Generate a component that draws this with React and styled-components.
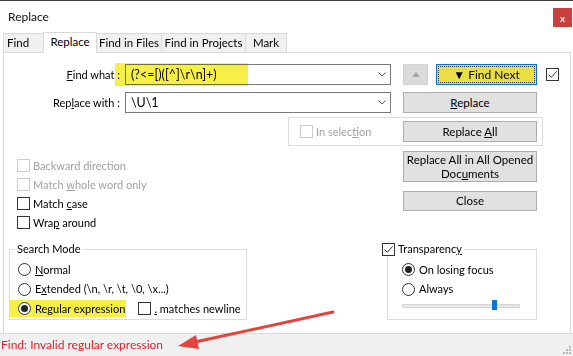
import React from "react";
import styled, { createGlobalStyle } from "styled-components";

const GlobalStyle = createGlobalStyle`
  html, body { margin: 0; padding: 0; background: #fff; }
  body {
    font-family: Lato, "Liberation Sans", sans-serif;
    font-size: 11px;
    line-height: 14px;
    color: #000;
  }
`;

const tabs = [
  { label: "Find", w: 41, left: true },
  { label: "Replace", w: 54, active: true },
  { label: "Find in Files", w: 66 },
  { label: "Find in Projects", w: 85 },
  { label: "Mark", w: 42 },
];

function CheckBox({ checked, disabled, children }) {
  return (
    <CheckLabel $disabled={disabled}>
      <Box $disabled={disabled}>
        {checked && (
          <svg width="11" height="11" viewBox="0 0 11 11">
            <path d="M1.5 5.5 L4.3 8.3 L9.6 2.4" fill="none" stroke="#333" strokeWidth="1" />
          </svg>
        )}
      </Box>
      {children && <span>{children}</span>}
    </CheckLabel>
  );
}

function Radio({ checked, children }) {
  return (
    <CheckLabel>
      <Circle>{checked && <Dot />}</Circle>
      <span>{children}</span>
    </CheckLabel>
  );
}

function Chevron() {
  return (
    <svg width="8" height="5" viewBox="0 0 8 5">
      <path d="M0.5 0.5 L4 4 L7.5 0.5" fill="none" stroke="#555" strokeWidth="1" />
    </svg>
  );
}

function Combo({ value }) {
  return (
    <ComboBox>
      <span>{value}</span>
      <ChevronSlot>
        <Chevron />
      </ChevronSlot>
    </ComboBox>
  );
}

function Btn({ h, children }) {
  return (
    <Button $h={h}>
      <span>{children}</span>
    </Button>
  );
}

function Slider({ value }) {
  return (
    <SliderRow>
      <Track>
        <Thumb style={{ left: `${value}%` }} />
      </Track>
    </SliderRow>
  );
}

export default function App() {
  return (
    <>
      <GlobalStyle />
      <Window>
        <TitleBar>
          <Title>Replace</Title>
          <CloseBox>x</CloseBox>
        </TitleBar>
        <TabStrip>
          {tabs.map((t) => (
            <Tab key={t.label} $w={t.w} $active={t.active} $left={t.left}>
              {t.label}
            </Tab>
          ))}
        </TabStrip>
        <Panel>
          <FieldRow $top={11}>
            <Label>
              <U>F</U>ind what :
            </Label>
            <Combo value="(?<=[)([^]\r\n]+)" />
            <UpButton>
              <svg width="8" height="5" viewBox="0 0 8 5">
                <path d="M0 5 L4 0 L8 5 Z" fill="#a5a5a5" />
              </svg>
            </UpButton>
            <FindNext>
              <FocusRing>▼ Find Next</FocusRing>
            </FindNext>
            <CheckSlot>
              <CheckBox checked />
            </CheckSlot>
            <Highlight $left={111} $width={133} />
          </FieldRow>
          <FieldRow $top={7}>
            <Label>
              Rep<U>l</U>ace with :
            </Label>
            <Combo value="\U\1" />
            <ActionSlot>
              <Btn>
                <U>R</U>eplace
              </Btn>
            </ActionSlot>
          </FieldRow>
          <SelectionRow>
            <SelectionBox>
              <SelectionCheck>
                <CheckBox disabled>
                  In selec<U>t</U>ion
                </CheckBox>
              </SelectionCheck>
              <Btn>
                Replace <U>A</U>ll
              </Btn>
            </SelectionBox>
          </SelectionRow>
          <Lower>
            <LeftCol>
              <Option>
                <CheckBox disabled>Backward direction</CheckBox>
              </Option>
              <Option>
                <CheckBox disabled>
                  Match <U>w</U>hole word only
                </CheckBox>
              </Option>
              <Option>
                <CheckBox>
                  Match <U>c</U>ase
                </CheckBox>
              </Option>
              <Option>
                <CheckBox>
                  Wra<U>p</U> around
                </CheckBox>
              </Option>
              <SearchGroup>
                <Legend $offset={5}>Search Mode</Legend>
                <GroupBody $pad={8}>
                  <GroupRow $h={19}>
                    <Radio>
                      <U>N</U>ormal
                    </Radio>
                  </GroupRow>
                  <GroupRow $h={20}>
                    <Radio>
                      E<U>x</U>tended (\n, \r, \t, \0, \x...)
                    </Radio>
                  </GroupRow>
                  <GroupRow $h={19}>
                    <Marked>
                      <Radio checked>
                        Re<U>g</U>ular expression
                      </Radio>
                    </Marked>
                    <CheckBox>
                      <U>.</U> matches newline
                    </CheckBox>
                  </GroupRow>
                </GroupBody>
              </SearchGroup>
            </LeftCol>
            <RightCol>
              <ButtonStack>
                <Btn h={31}>
                  Replace All in All Opened
                  <br />
                  Doc<U>u</U>ments
                </Btn>
                <Btn h={20}>Close</Btn>
              </ButtonStack>
              <TransparencyGroup>
                <Legend $offset={-6} $flush>
                  <CheckBox checked>
                    Transparenc<U>y</U>
                  </CheckBox>
                </Legend>
                <GroupBody $pad={14}>
                  <GroupRow $h={19}>
                    <Radio checked>On losing focus</Radio>
                  </GroupRow>
                  <GroupRow $h={20}>
                    <Radio>Always</Radio>
                  </GroupRow>
                  <Slider value={77} />
                </GroupBody>
              </TransparencyGroup>
            </RightCol>
          </Lower>
        </Panel>
        <StatusBar>
          <StatusText>Find: Invalid regular expression</StatusText>
          <Grip>
            <svg width="8" height="8" viewBox="0 0 8 8">
              <g fill="#b8b8b8">
                <rect x="6" y="0" width="2" height="2" />
                <rect x="3" y="3" width="2" height="2" />
                <rect x="6" y="3" width="2" height="2" />
                <rect x="0" y="6" width="2" height="2" />
                <rect x="3" y="6" width="2" height="2" />
                <rect x="6" y="6" width="2" height="2" />
              </g>
            </svg>
          </Grip>
        </StatusBar>
        <Annotation width="573" height="356" viewBox="0 0 573 356">
          <line x1="333" y1="311" x2="195" y2="341" stroke="#e4443f" strokeWidth="3" strokeLinecap="round" />
          <path d="M178 345 L196 334 L199 348 Z" fill="#e4443f" />
        </Annotation>
      </Window>
    </>
  );
}

const Window = styled.div`
  position: relative;
  width: 573px;
  height: 356px;
  box-sizing: border-box;
  border-top: 1px solid #3a3a3a;
  display: flex;
  flex-direction: column;
  overflow: hidden;
  background: #fff;
`;

const TitleBar = styled.div`
  height: 31px;
  display: flex;
  align-items: center;
  justify-content: space-between;
  padding: 0 1px 0 8px;
  flex: none;
`;

const Title = styled.div`
  font-size: 12px;
  color: #111;
`;

const CloseBox = styled.div`
  width: 19px;
  height: 19px;
  margin-top: 2px;
  background: #c9413f;
  color: #fff;
  font-weight: bold;
  font-size: 10px;
  display: flex;
  align-items: center;
  justify-content: center;
`;

const TabStrip = styled.div`
  height: 20px;
  display: flex;
  align-items: flex-end;
  padding-left: 3px;
  flex: none;
`;

const Tab = styled.div`
  box-sizing: border-box;
  width: ${(p) => p.$w}px;
  height: ${(p) => (p.$active ? 21 : 19)}px;
  margin-bottom: ${(p) => (p.$active ? -1 : 0)}px;
  padding: 0 0 ${(p) => (p.$active ? 3 : 0)}px ${(p) => (p.$left ? 3 : 0)}px;
  border: 1px solid #d9d9d9;
  border-bottom: none;
  background: ${(p) => (p.$active ? "#fff" : "#f0f0f0")};
  font-size: 11.5px;
  display: flex;
  align-items: center;
  justify-content: ${(p) => (p.$left ? "flex-start" : "center")};
  position: relative;
  z-index: ${(p) => (p.$active ? 1 : 0)};
  & + & {
    margin-left: -1px;
  }
`;

const Panel = styled.div`
  flex: 1;
  margin: 0 2px 0 3px;
  border: 1px solid #d9d9d9;
  border-bottom: none;
  display: flex;
  flex-direction: column;
`;

const FieldRow = styled.div`
  position: relative;
  display: flex;
  align-items: center;
  height: 21px;
  margin-top: ${(p) => p.$top}px;
`;

const Label = styled.div`
  width: 118px;
  box-sizing: border-box;
  padding-right: 2px;
  text-align: right;
  flex: none;
`;

const U = styled.span`
  text-decoration: underline;
  text-underline-offset: 1px;
`;

const ComboBox = styled.div`
  margin-left: 3px;
  width: 266px;
  height: 21px;
  box-sizing: border-box;
  border: 1px solid #7a7a7a;
  background: #fff;
  display: flex;
  align-items: center;
  justify-content: space-between;
  padding-left: 5px;
  flex: none;
  font-size: 12.5px;
  white-space: pre;
`;

const ChevronSlot = styled.span`
  width: 16px;
  display: flex;
  justify-content: center;
`;

const UpButton = styled.div`
  margin-left: 12px;
  width: 25px;
  height: 21px;
  box-sizing: border-box;
  background: #dadada;
  border: 1px solid #d3d3d3;
  display: flex;
  align-items: center;
  justify-content: center;
  flex: none;
`;

const FindNext = styled.div`
  margin-left: 8px;
  width: 101px;
  height: 21px;
  box-sizing: border-box;
  background: #e9df44;
  border: 1px solid #0a70c8;
  padding: 1px;
  display: flex;
  flex: none;
`;

const FocusRing = styled.div`
  flex: 1;
  border: 1px dotted #333;
  display: flex;
  align-items: center;
  justify-content: center;
  font-size: 12px;
`;

const CheckSlot = styled.div`
  margin-left: 9px;
  display: flex;
`;

const ActionSlot = styled.div`
  margin-left: 12px;
  display: flex;
`;

const Highlight = styled.span`
  position: absolute;
  left: ${(p) => p.$left}px;
  width: ${(p) => p.$width}px;
  top: -1px;
  bottom: -1px;
  background: #f6f046;
  mix-blend-mode: multiply;
  pointer-events: none;
`;

const Button = styled.div`
  width: 134px;
  height: ${(p) => p.$h || 21}px;
  box-sizing: border-box;
  background: #e1e1e1;
  border: 1px solid #adadad;
  display: flex;
  align-items: center;
  justify-content: center;
  text-align: center;
  font-size: 11.5px;
  line-height: 14px;
  flex: none;
`;

const SelectionRow = styled.div`
  margin-top: 4px;
  padding-left: 284px;
  display: flex;
`;

const SelectionBox = styled.div`
  width: 255px;
  height: 29px;
  box-sizing: border-box;
  border: 1px solid #dcdcdc;
  display: flex;
  align-items: center;
  padding: 0 5px 0 11px;
`;

const SelectionCheck = styled.div`
  flex: 1;
  display: flex;
`;

const CheckLabel = styled.label`
  display: inline-flex;
  align-items: center;
  gap: 3px;
  color: ${(p) => (p.$disabled ? "#a2a2a2" : "#000")};
  white-space: nowrap;
`;

const Box = styled.span`
  width: 13px;
  height: 13px;
  box-sizing: border-box;
  border: 1px solid ${(p) => (p.$disabled ? "#cccccc" : "#333")};
  background: #fff;
  display: inline-flex;
  align-items: center;
  justify-content: center;
  flex: none;
`;

const Circle = styled.span`
  width: 13px;
  height: 13px;
  box-sizing: border-box;
  border: 1px solid #333;
  border-radius: 50%;
  background: #fff;
  display: inline-flex;
  align-items: center;
  justify-content: center;
  flex: none;
  margin-right: 1px;
`;

const Dot = styled.span`
  width: 7px;
  height: 7px;
  border-radius: 50%;
  background: #222;
`;

const Lower = styled.div`
  flex: 1;
  display: flex;
`;

const LeftCol = styled.div`
  width: 378px;
  display: flex;
  flex-direction: column;
  padding-top: 10px;
`;

const Option = styled.div`
  height: 19px;
  display: flex;
  align-items: center;
  padding-left: 13px;
`;

const Group = styled.fieldset`
  margin: 0;
  padding: 0;
  min-width: 0;
  box-sizing: border-box;
  border: 1px solid #dcdcdc;
  height: 78px;
`;

const SearchGroup = styled(Group)`
  margin: 10px 0 0 5px;
  width: 238px;
`;

const TransparencyGroup = styled(Group)`
  margin: 31px 0 0 5px;
  width: 150px;
`;

const Legend = styled.legend`
  padding: ${(p) => (p.$flush ? "0 2px 0 0" : "0 2px")};
  margin-left: ${(p) => p.$offset}px;
  line-height: 14px;
  display: flex;
`;

const GroupBody = styled.div`
  padding: 4px 0 0 ${(p) => p.$pad}px;
  display: flex;
  flex-direction: column;
`;

const GroupRow = styled.div`
  height: ${(p) => p.$h}px;
  display: flex;
  align-items: center;
  gap: 12px;
`;

const Marked = styled.div`
  height: 17px;
  margin-left: -9px;
  padding: 0 1px 0 9px;
  display: flex;
  align-items: center;
  background: #f6f046;
`;

const RightCol = styled.div`
  flex: 1;
  display: flex;
  flex-direction: column;
  align-items: flex-start;
`;

const ButtonStack = styled.div`
  margin: 5px 0 0 21px;
  display: flex;
  flex-direction: column;
  gap: 9px;
`;

const SliderRow = styled.div`
  height: 14px;
  display: flex;
  align-items: center;
`;

const Track = styled.div`
  position: relative;
  width: 118px;
  height: 4px;
  box-sizing: border-box;
  background: #e7e7e7;
  border: 1px solid #d6d6d6;
`;

const Thumb = styled.span`
  position: absolute;
  top: -5px;
  width: 5px;
  height: 10px;
  background: #0a78d2;
`;

const StatusBar = styled.div`
  height: 23px;
  box-sizing: border-box;
  border-top: 1px solid #dadada;
  background: #f0f0f0;
  display: flex;
  align-items: center;
  justify-content: space-between;
  padding: 0 2px 0 1px;
  flex: none;
`;

const StatusText = styled.div`
  color: #e2202b;
  font-size: 12px;
`;

const Grip = styled.div`
  align-self: flex-end;
  margin-bottom: 2px;
  display: flex;
`;

const Annotation = styled.svg`
  position: absolute;
  left: 0;
  top: 0;
  pointer-events: none;
`;
